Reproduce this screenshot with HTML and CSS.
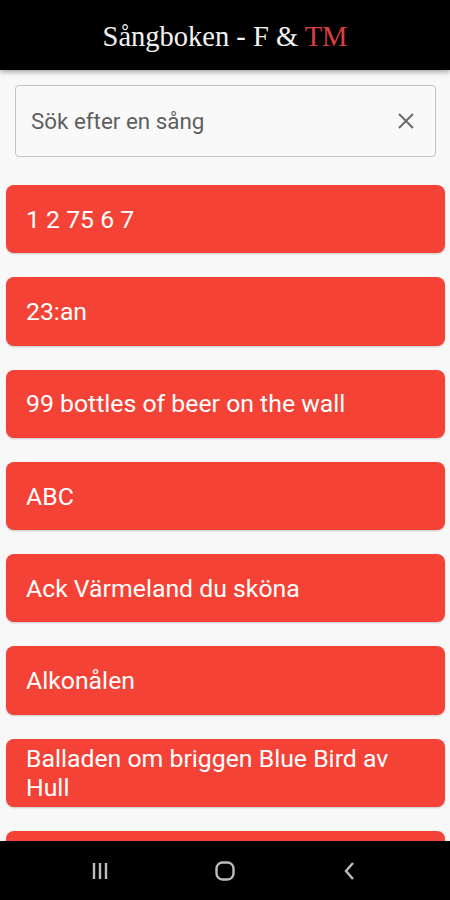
FILE: index.html
```html
<!DOCTYPE html>
<html lang="sv">
<head>
    <meta charset="UTF-8">
    <meta name="viewport" content="width=device-width, initial-scale=1.0">
    <title>Sångboken - F &amp; TM</title>
    <link rel="stylesheet" href="styles.css">
</head>
<body>
    <header class="topbar">
        <h1>Sångboken - F &amp; <span class="red">TM</span></h1>
    </header>

    <main class="content">
        <div class="search">
            <span class="search-text">Sök efter en sång</span>
            <svg class="clear" width="24" height="24" viewBox="0 0 24 24">
                <path d="M5 5L19 19M19 5L5 19" stroke="#6b6b6b" stroke-width="2" fill="none"/>
            </svg>
        </div>

        <ul class="songs">
            <li class="song">1 2 75 6 7</li>
            <li class="song">23:an</li>
            <li class="song">99 bottles of beer on the wall</li>
            <li class="song">ABC</li>
            <li class="song">Ack Värmeland du sköna</li>
            <li class="song">Alkonålen</li>
            <li class="song">Balladen om briggen Blue Bird av Hull</li>
            <li class="song">Bellmans</li>
        </ul>
    </main>

    <nav class="navbar">
        <svg width="24" height="24" viewBox="0 0 24 24">
            <path d="M6 4V20M12 4V20M18 4V20" stroke="#bdbdbd" stroke-width="2.4" fill="none"/>
        </svg>
        <svg width="24" height="24" viewBox="0 0 24 24">
            <rect x="3.5" y="3.5" width="17" height="17" rx="6" stroke="#bdbdbd" stroke-width="2.4" fill="none"/>
        </svg>
        <svg width="24" height="24" viewBox="0 0 24 24">
            <path d="M15 4L8 12L15 20" stroke="#bdbdbd" stroke-width="2.4" fill="none"/>
        </svg>
    </nav>
</body>
</html>
```

FILE: styles.css
```css
html, body {
    margin: 0;
    height: 100%;
}
body {
    font-family: Roboto, "Noto Sans", sans-serif;
    background-color: #f8f8f8;
    width: 450px;
    height: 900px;
    overflow: hidden;
    position: relative;
}
.topbar {
    height: 70px;
    background-color: #000;
    display: flex;
    align-items: center;
    justify-content: center;
    box-shadow: 0 2px 5px rgba(0,0,0,0.35);
    position: relative;
    z-index: 1;
}
.topbar h1 {
    margin: 0;
    font-family: "Liberation Serif", serif;
    font-weight: normal;
    font-size: 28.5px;
    color: #f2f2f2;
    padding-top: 3px;
}
.red {
    color: #d8403a;
}
.content {
    padding: 15px 5px 0 6px;
}
.search {
    margin: 0 9px 0 9px;
    height: 70px;
    border: 1px solid #c4c4c4;
    border-radius: 4px;
    background-color: #f9f9f9;
    display: flex;
    align-items: center;
    justify-content: space-between;
    padding: 0 17px 0 15px;
}
.search-text {
    font-size: 22.4px;
    color: #5f5f5f;
}
.songs {
    list-style: none;
    margin: 28px 0 0 0;
    padding: 0;
    display: flex;
    flex-direction: column;
    gap: 24px;
}
.song {
    height: 68.3px;
    box-sizing: border-box;
    background-color: #f44336;
    border-radius: 8px;
    color: #fff;
    font-size: 24.8px;
    line-height: 29px;
    padding: 0 20px;
    display: flex;
    align-items: center;
    box-shadow: 0 1px 2px rgba(0,0,0,0.2);
}
.navbar {
    position: absolute;
    left: 0;
    right: 0;
    bottom: 0;
    height: 59px;
    background-color: #000;
    display: flex;
    justify-content: space-around;
    align-items: center;
    padding: 0 37px;
}
```
